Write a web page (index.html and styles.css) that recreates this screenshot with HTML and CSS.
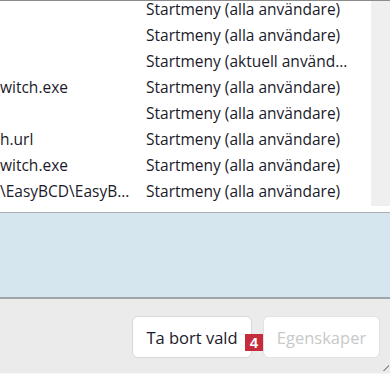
FILE: index.html
```html
<!DOCTYPE html>
<html lang="sv">
<head>
    <meta charset="UTF-8">
    <meta name="viewport" content="width=device-width, initial-scale=1.0">
    <title>EasyBCD - Startmeny</title>
    <link rel="stylesheet" href="styles.css">
</head>
<body>
    <div class="window">
        <div class="list">
            <div class="rows">
                <div class="row"><span class="path"></span><span class="place">Startmeny (alla användare)</span></div>
                <div class="row"><span class="path"></span><span class="place">Startmeny (alla användare)</span></div>
                <div class="row"><span class="path"></span><span class="place">Startmeny (aktuell använd...</span></div>
                <div class="row"><span class="path">witch.exe</span><span class="place">Startmeny (alla användare)</span></div>
                <div class="row"><span class="path"></span><span class="place">Startmeny (alla användare)</span></div>
                <div class="row"><span class="path">h.url</span><span class="place">Startmeny (alla användare)</span></div>
                <div class="row"><span class="path">witch.exe</span><span class="place">Startmeny (alla användare)</span></div>
                <div class="row"><span class="path">\EasyBCD\EasyB...</span><span class="place">Startmeny (alla användare)</span></div>
            </div>
            <div class="scrollbar"></div>
        </div>
        <div class="details"></div>
        <div class="footer">
            <button class="btn">Ta bort vald</button>
            <button class="btn" disabled>Egenskaper</button>
            <span class="badge">4</span>
            <span class="grip"></span>
        </div>
    </div>
</body>
</html>
```

FILE: styles.css
```css
body {
    margin: 0;
    padding: 0;
    background-color: #ebebeb;
    font-family: "Open Sans", "Noto Sans", sans-serif;
    font-size: 15.5px;
    color: #1a1a2a;
}
.window {
    display: flex;
    flex-direction: column;
    height: 374px;
    overflow: hidden;
}
.list {
    display: flex;
    height: 212px;
    background: #fff;
    border-top: 1px solid #8c8c8c;
    box-sizing: border-box;
    overflow: hidden;
}
.rows {
    flex: 1;
    margin-top: -5px;
}
.row {
    display: flex;
    height: 26px;
    align-items: center;
    white-space: nowrap;
}
.path {
    width: 146px;
    flex-shrink: 0;
    overflow: hidden;
}
.place {
    overflow: hidden;
}
.scrollbar {
    width: 19px;
    height: 205px;
    background: #efefef;
}
.details {
    height: 84px;
    background: #d5e6ee;
    border-top: 1px solid #a7afb5;
    border-bottom: 2px solid #a2a6a9;
}
.footer {
    position: relative;
    flex: 1;
    display: flex;
    justify-content: flex-end;
    align-items: flex-start;
    gap: 11px;
    padding: 17px 10px 0 0;
    border-bottom: 1px solid #f6f6f6;
}
.btn {
    width: 120px;
    height: 42px;
    background: #fff;
    border: 1px solid #d8d8d8;
    border-radius: 6px;
    font-family: inherit;
    font-size: 16.5px;
    color: #1a1a2a;
    padding: 0;
}
.btn:disabled {
    width: 117px;
    color: #c9c9c9;
    border-color: #e2e2e2;
}
.badge {
    position: absolute;
    left: 245px;
    top: 35px;
    width: 18px;
    height: 17px;
    background: #c62b3b;
    color: #fff;
    font-family: "Liberation Sans", sans-serif;
    font-weight: bold;
    font-size: 15px;
    line-height: 17px;
    text-align: center;
}
.grip {
    position: absolute;
    right: 1px;
    bottom: 2px;
    width: 6px;
    height: 6px;
    background: linear-gradient(135deg, transparent 45%, #9a9a9a 45%, #9a9a9a 60%, transparent 60%);
}
```
